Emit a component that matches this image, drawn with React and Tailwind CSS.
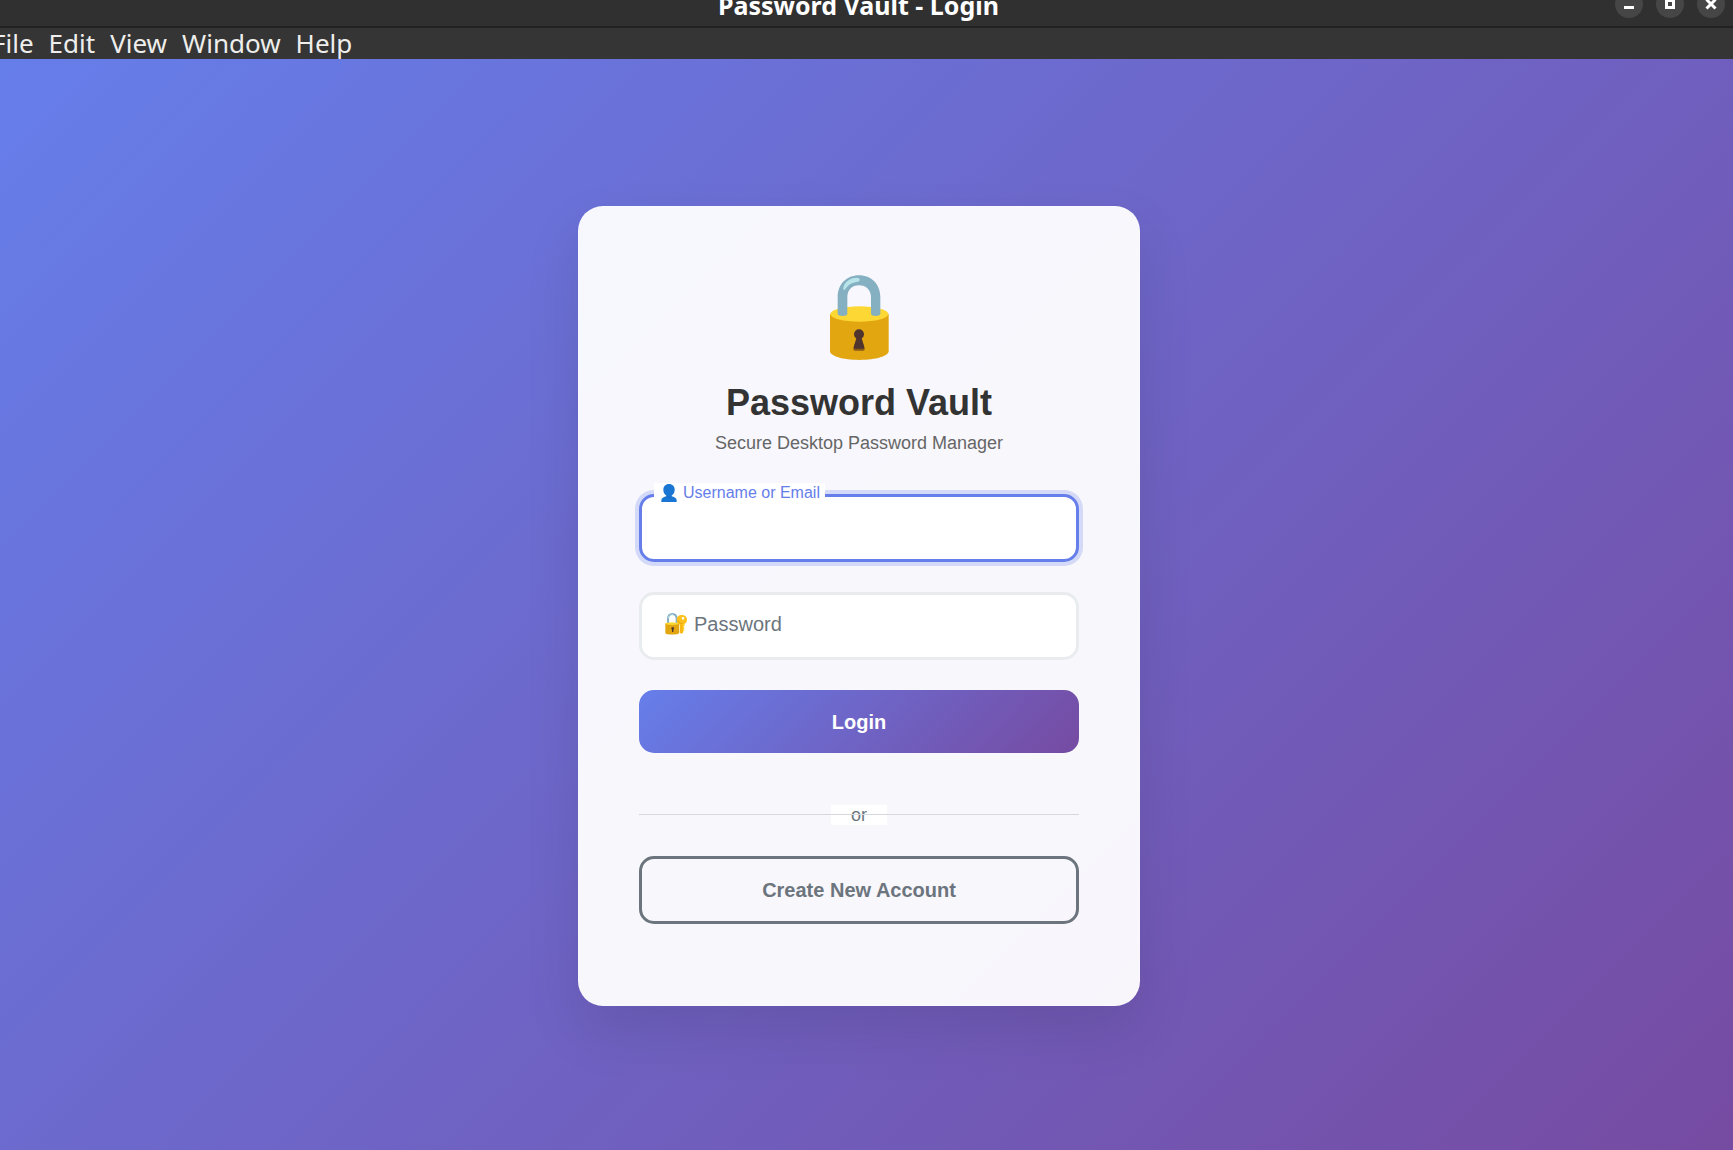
import React from "react";

function PadlockIcon() {
  return (
    <svg viewBox="114 40 189 261" className="h-[87px] w-[63px]" aria-hidden="true">
      <path d="M120 160V272C120 286 158 298 208 298S296 286 296 272V160Z" fill="#e2a610" />
      <ellipse cx="208" cy="160" rx="87" ry="23" fill="#fdd835" />
      <path
        d="M143 160V110C143 70 170 44 207 44S271 70 271 110V160C271 168 243 168 243 160V110C243 88 228 74 207 74S172 88 172 110V160C172 168 143 168 143 160Z"
        fill="#84b0c1"
      />
      <path d="M160 86C158 68 178 50 202 51C212 52 211 61 203 63C184 66 177 71 168 83C165 88 161 90 160 86Z" fill="#b9e4ea" />
      <path d="M200 230L190 264Q189 270 195 270H219Q225 270 224 264L214 230Z" fill="#8a5a18" />
      <circle cx="207" cy="221" r="15" fill="#4e342e" />
      <path d="M201 228L191 259Q190 264 195 264H219Q224 264 223 259L213 228Z" fill="#4e342e" />
    </svg>
  );
}

function UserIcon() {
  return (
    <svg viewBox="0 0 48 54" className="h-[18px] w-4 shrink-0" aria-hidden="true">
      <path d="M17 28H31V37C40 39 47 42 47 49V54H1V49C1 42 8 39 17 37Z" fill="#1976d2" />
      <path d="M24 0C34 0 41 7 41 17C41 29 33 37 24 37S7 29 7 17C7 7 14 0 24 0Z" fill="#1976d2" />
      <path d="M15 36C19 41 29 41 33 36" fill="none" stroke="#1565c0" strokeWidth="2" />
    </svg>
  );
}

function LockKeyIcon() {
  return (
    <svg viewBox="0 0 66 66" className="size-[22px] shrink-0" aria-hidden="true">
      <path d="M9 34V18C9 8 15 3 22 3S35 8 35 18V34" fill="none" stroke="#84b0c1" strokeWidth="6" />
      <path d="M10 15C12 7 18 4 24 5" fill="none" stroke="#b9e4ea" strokeWidth="3" />
      <path d="M1 31H42V60C42 66 1 66 1 60Z" fill="#e2a610" />
      <ellipse cx="21" cy="32" rx="20" ry="4" fill="#fdd835" />
      <path d="M20 43H27V48L25 50V57H21V50L19 48Z" fill="#4e342e" />
      <path d="M44 32L54 34V59L50 62L44 59Z" fill="#f9b814" />
      <path d="M54 32V56L59 52L56 49L59 45L56 42L59 38V32Z" fill="#fdd835" />
      <path
        fillRule="evenodd"
        d="M50 6C60 6 66 12 66 20S60 35 50 35S35 29 35 20S41 6 50 6ZM54 12A4 4 0 1 0 54 20A4 4 0 1 0 54 12Z"
        fill="#fcc21b"
      />
      <path d="M39 22C40 29 46 32 53 31" fill="none" stroke="#e2a610" strokeWidth="3" />
    </svg>
  );
}

const windowButtons = [
  { label: "Minimize", shape: <path d="M9 17.5H19" strokeWidth="3" /> },
  { label: "Maximize", shape: <rect x="10.5" y="10.5" width="7" height="7" strokeWidth="3" /> },
  { label: "Close", shape: <path d="M9.5 9.5L18.5 18.5M18.5 9.5L9.5 18.5" strokeWidth="3" /> },
];

function TitleBar() {
  return (
    <header className="flex h-7 items-end overflow-hidden border-b-2 border-[#222222] bg-[#303030]">
      <div className="grid h-11 w-full grid-cols-[1fr_auto_1fr] items-center pr-2 text-white">
        <span />
        <h1 className="-ml-2 pt-0.5 text-[25px] leading-8 font-bold">Password Vault - Login</h1>
        <div className="flex justify-end gap-[13px]">
          {windowButtons.map((b) => (
            <button key={b.label} type="button" aria-label={b.label} className="size-7 rounded-full bg-[#464646]">
              <svg viewBox="0 0 28 28" className="size-7" fill="none" stroke="#ffffff">
                {b.shape}
              </svg>
            </button>
          ))}
        </div>
      </div>
    </header>
  );
}

function MenuBar() {
  return (
    <nav className="h-[31px] overflow-hidden bg-[#353535] text-[#eeeeec]">
      <div className="-ml-2 flex gap-[15px] text-[26px] leading-[31px]">
        {["File", "Edit", "View", "Window", "Help"].map((m) => (
          <button key={m} type="button">
            {m}
          </button>
        ))}
      </div>
    </nav>
  );
}

export default function App() {
  return (
    <div className="flex min-h-screen flex-col font-['Noto_Sans',sans-serif]">
      <TitleBar />
      <MenuBar />
      <main className="flex flex-1 items-center justify-center bg-[linear-gradient(135deg,#667eea_0%,#764ba2_100%)] pt-[3px] pr-[15px] font-['Liberation_Sans',Arial,sans-serif]">
        <form className="flex w-full max-w-[562px] flex-col rounded-[25px] border border-white/20 bg-white/95 px-[60px] pt-[67px] pb-[81px] shadow-[0_25px_56px_rgba(0,0,0,0.1)]">
          <div className="flex flex-col items-center">
            <PadlockIcon />
            <h2 className="mt-5 text-4xl leading-[44px] font-bold text-[#333333]">Password Vault</h2>
            <p className="mt-1.5 text-lg leading-6 text-[#666666]">Secure Desktop Password Manager</p>
          </div>

          <div className="relative mt-[39px]">
            <input
              id="username"
              type="text"
              className="block h-[68px] w-full rounded-[15px] border-[3px] border-[#667eea] bg-white px-6 text-xl text-[#333333] shadow-[0_0_0_4px_rgba(102,126,234,0.25)] outline-none"
            />
            <label
              htmlFor="username"
              className="absolute -top-[11px] left-[15px] flex items-center gap-[6px] bg-white pr-[5px] pl-[7px] text-base leading-5 text-[#667eea]"
            >
              <UserIcon />
              Username or Email
            </label>
          </div>

          <div className="relative mt-[30px]">
            <input
              id="password"
              type="password"
              className="block h-[68px] w-full rounded-[15px] border-[3px] border-[#e9ecef] bg-white px-6 text-xl text-[#333333] outline-none"
            />
            <label
              htmlFor="password"
              className="absolute top-5 left-[26px] flex items-center gap-[7px] text-xl leading-6 text-[#6c757d]"
            >
              <LockKeyIcon />
              Password
            </label>
          </div>

          <button
            type="submit"
            className="mt-[30px] h-[63px] rounded-[15px] bg-[linear-gradient(135deg,#667eea_0%,#764ba2_100%)] text-xl font-bold text-white"
          >
            Login
          </button>

          <div className="relative mt-[52px] flex justify-center">
            <span className="bg-white px-5 text-lg leading-5 text-[#6c757d]">or</span>
            <hr className="absolute inset-x-0 top-[9px] border-[#d5d9dd]" />
          </div>

          <button
            type="button"
            className="mt-[31px] h-[68px] rounded-[15px] border-[3px] border-[#6c757d] text-xl font-bold text-[#6c757d]"
          >
            Create New Account
          </button>
        </form>
      </main>
    </div>
  );
}
